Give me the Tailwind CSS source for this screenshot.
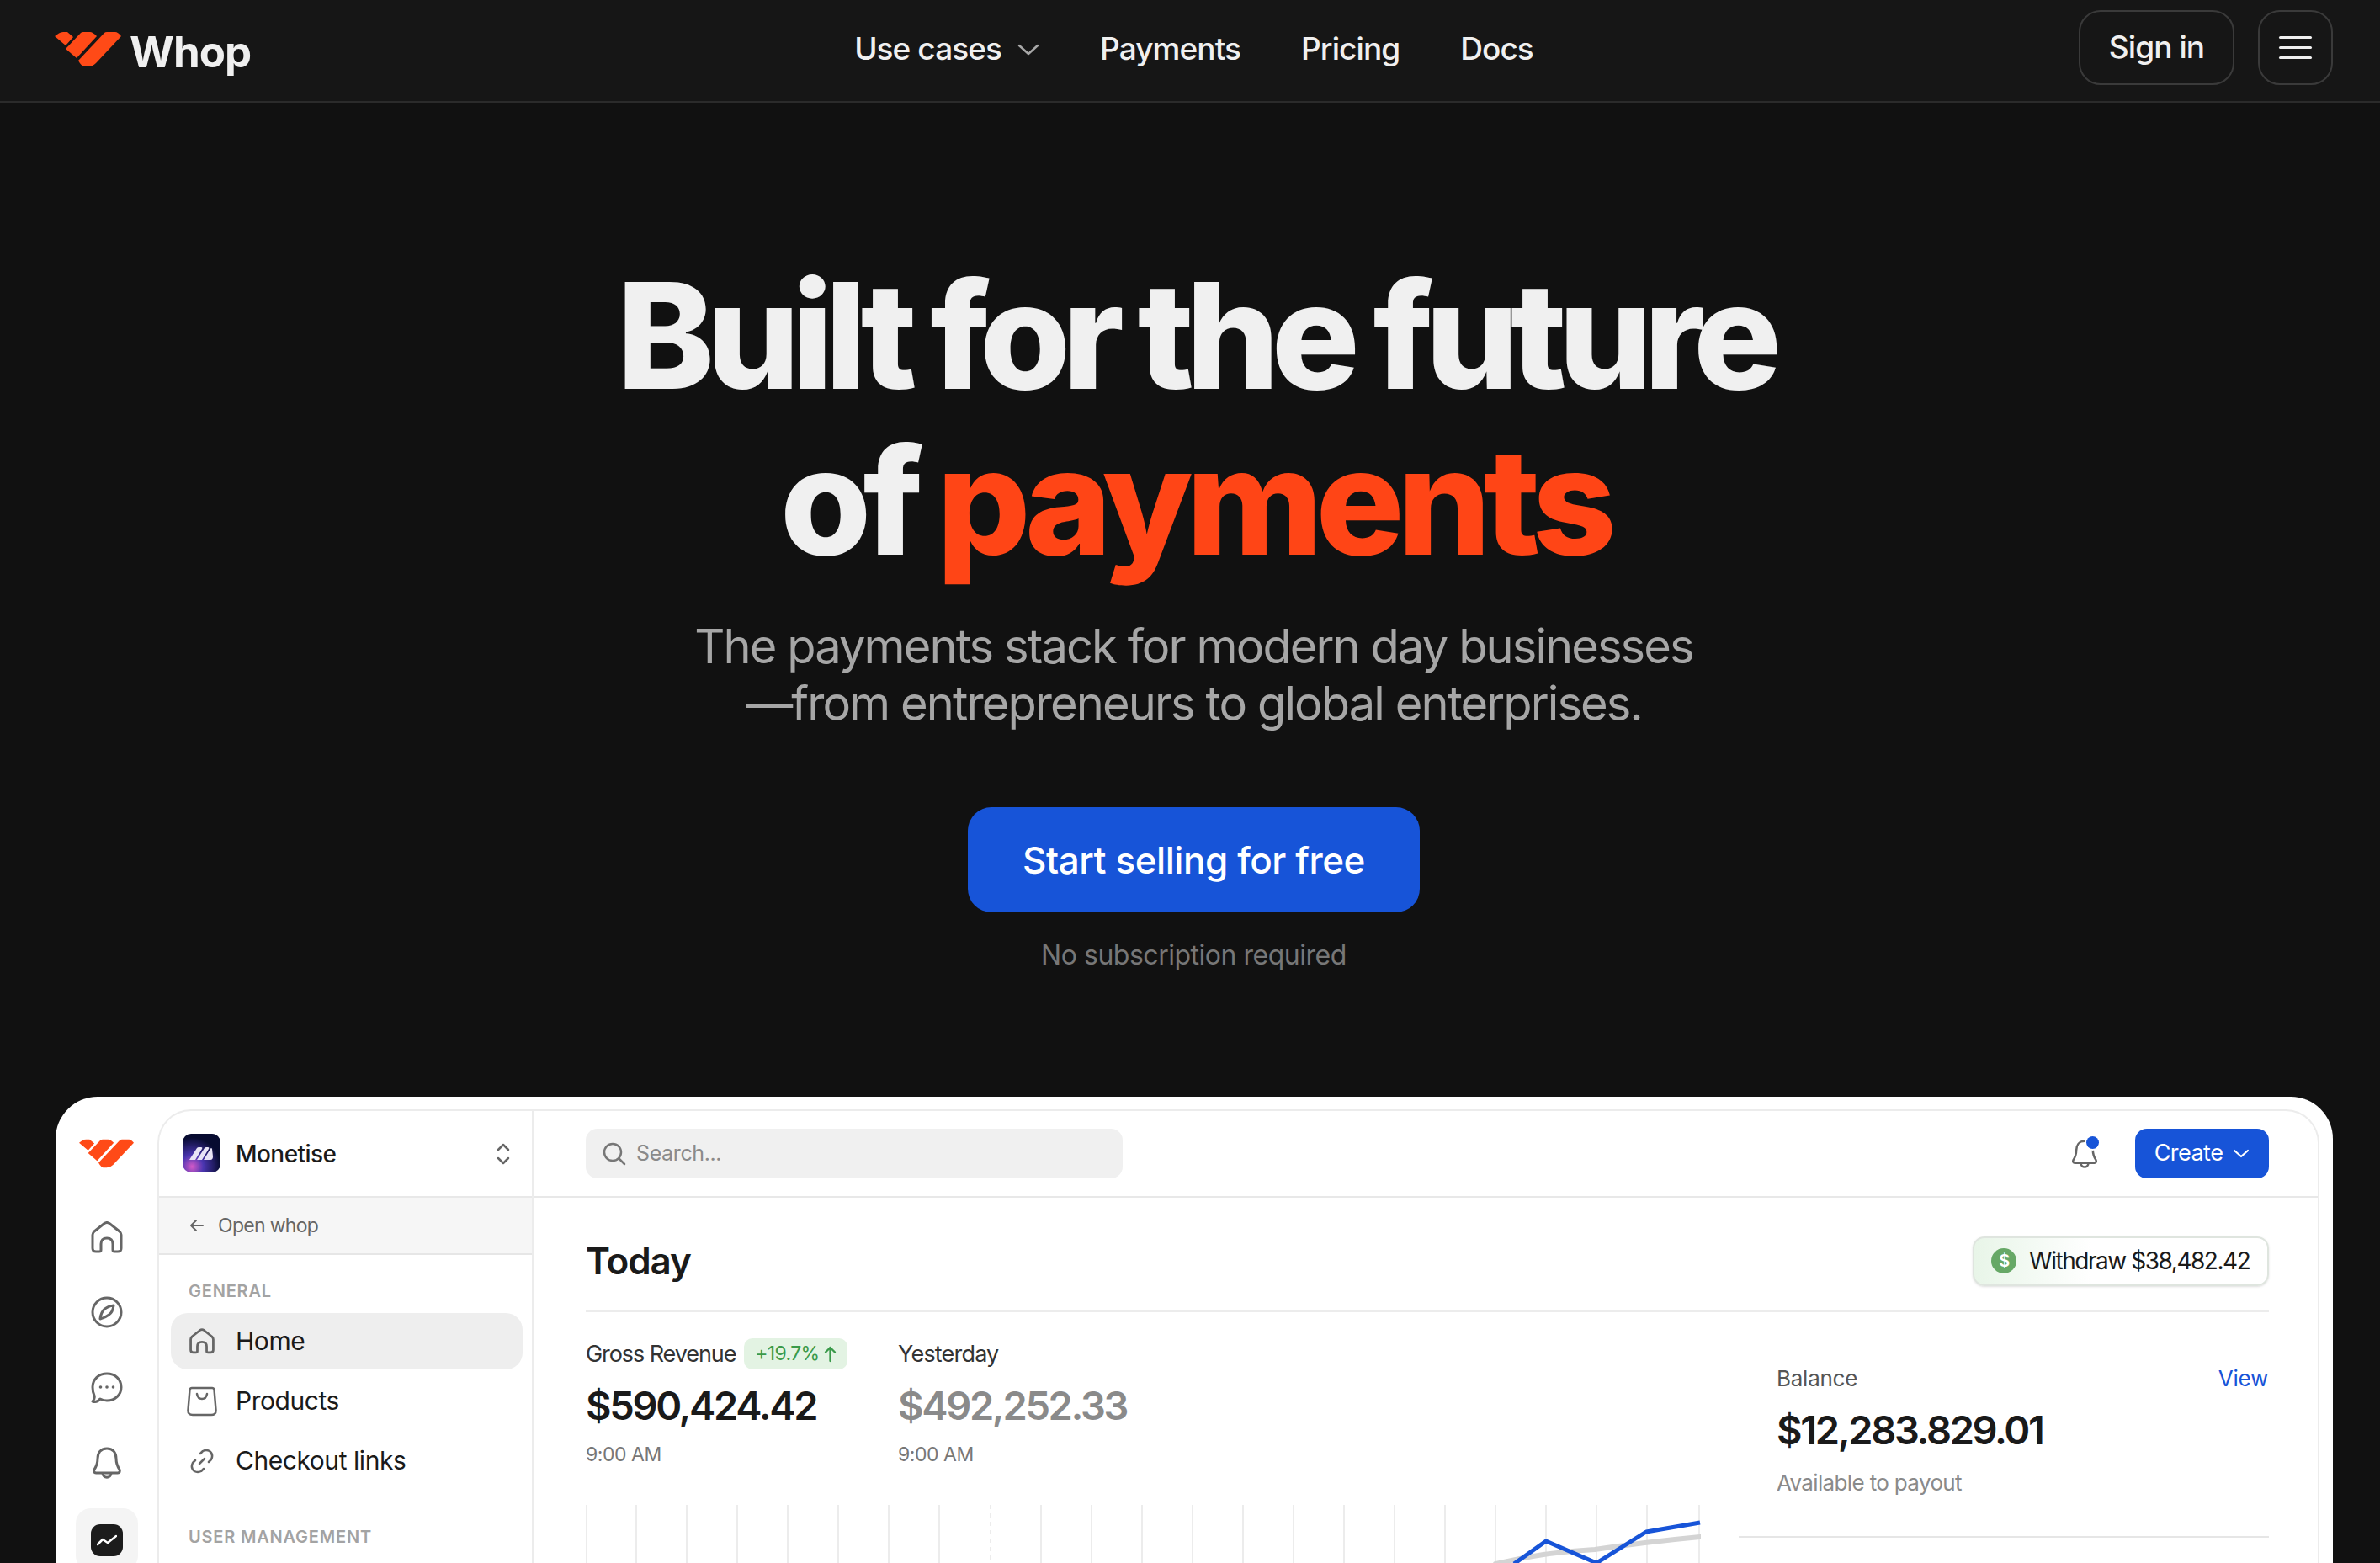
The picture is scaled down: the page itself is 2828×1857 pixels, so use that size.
<!DOCTYPE html>
<html lang="en">
<head>
  <meta charset="UTF-8" />
  <meta name="viewport" content="width=device-width, initial-scale=1.0"/>
  <title>Whop</title>
  <script src="https://cdn.jsdelivr.net/npm/@tailwindcss/browser@4"></script>
</head>
<body class="bg-[#111111] font-['Inter',sans-serif] h-[1857px] overflow-hidden">
  <!-- Navbar -->
  <header class="h-[122px] bg-[#161616] border-b-2 border-[#2b2b2b] flex items-center justify-between pl-[65px] pr-[56px] text-[#f0f0f0] relative">
    <a href="#" class="flex items-center gap-[10px] w-[300px]">
      <svg class="w-[79px] h-[41px] -mt-[3px]" viewBox="0 0 79 41" fill="#ff4a17">
        <path d="M0 5 L5 1.5 Q7 0 10 0 L15 0 L22 6 L13 16 Z"/>
        <path d="M13 20 L31 1 Q32 0 34 0 L42 0 Q45 0 50 5 L26 31 Z"/>
        <path d="M28 34 L59 1 Q60 0 62 0 L72 0 Q75 0 79 5 L49 37 Q45 41 40 41 L35 41 Q32 41 28 34 Z"/>
      </svg>
      <span class="text-[51px] font-bold leading-none tracking-[-0.02em] mt-[3px]">Whop</span>
    </a>
    <nav class="flex items-center gap-[72px] text-[37px] font-medium tracking-[-0.025em] -mt-[5px] ml-[2px]">
      <a href="#" class="flex items-center gap-[19px]">Use cases
        <svg class="w-[26px] h-[14px] mt-[3px]" viewBox="0 0 26 14" fill="none" stroke="#a8a8a8" stroke-width="2.5" stroke-linecap="round" stroke-linejoin="round"><path d="M2 2l11 10L24 2"/></svg>
      </a>
      <a href="#">Payments</a>
      <a href="#">Pricing</a>
      <a href="#">Docs</a>
    </nav>
    <div class="flex items-center gap-[28px] -mt-[8px]">
      <button class="w-[185px] h-[89px] rounded-[26px] border-2 border-[#3a3a3a] text-[37px] font-medium tracking-[-0.025em]">Sign in</button>
      <button class="w-[89px] h-[89px] rounded-[26px] border-2 border-[#3a3a3a] flex flex-col items-center justify-center gap-[9px]">
        <span class="w-[39px] h-[3px] rounded-full bg-[#f0f0f0]"></span>
        <span class="w-[39px] h-[3px] rounded-full bg-[#f0f0f0]"></span>
        <span class="w-[39px] h-[3px] rounded-full bg-[#f0f0f0]"></span>
      </button>
    </div>
  </header>

  <!-- Hero -->
  <section class="flex flex-col items-center pl-[9px]">
    <h1 class="mt-[178px] ml-[3px] text-[175px] leading-[197px] font-extrabold tracking-[-0.056em] [word-spacing:-3px] text-center text-[#f0f0f0] whitespace-nowrap">
      Built for the future<br>of <span class="text-[#ff4516] tracking-[-0.047em]">payments</span>
    </h1>
    <p class="mt-[40px] text-[56px] leading-[68px] tracking-[-0.034em] text-center text-[#a6a6a6]">
      The payments stack for modern day businesses<br>—from entrepreneurs to global enterprises.
    </p>
    <a href="#" class="mt-[89px] w-[537px] h-[125px] rounded-[28px] bg-[#1754d8] text-white text-[44px] font-medium tracking-[-0.01em] flex items-center justify-center">Start selling for free</a>
    <p class="mt-[29px] text-[32px] leading-[44px] tracking-[-0.015em] text-[#777777]">No subscription required</p>
  </section>

  <!-- Dashboard preview -->
  <section class="mt-[146px] ml-[66px] w-[2706px] h-[600px] bg-white rounded-t-[50px] flex overflow-hidden">
    <!-- Icon rail -->
    <aside class="w-[121px] shrink-0 flex flex-col items-center text-[#666666]">
      <svg class="mt-[50px] w-[65px] h-[35px]" viewBox="0 0 79 41" fill="#ff4a17">
        <path d="M0 5 L5 1.5 Q7 0 10 0 L15 0 L22 6 L13 16 Z"/>
        <path d="M13 20 L31 1 Q32 0 34 0 L42 0 Q45 0 50 5 L26 31 Z"/>
        <path d="M28 34 L59 1 Q60 0 62 0 L72 0 Q75 0 79 5 L49 37 Q45 41 40 41 L35 41 Q32 41 28 34 Z"/>
      </svg>
      <svg class="mt-[63px] w-[38px] h-[38px]" viewBox="0 0 38 38" fill="none" stroke="currentColor" stroke-width="3" stroke-linejoin="round" stroke-linecap="round"><path d="M2 16 Q2 14 4 12 L16 2.5 Q19 0.5 22 2.5 L34 12 Q36 14 36 16 V32 Q36 36 32 36 H28 Q26 36 26 34 V27 Q26 20 19 20 Q12 20 12 27 V34 Q12 36 10 36 H6 Q2 36 2 32 Z"/></svg>
      <svg class="mt-[51px] w-[38px] h-[38px]" viewBox="0 0 38 38" fill="none" stroke="currentColor" stroke-width="3" stroke-linejoin="round"><circle cx="19" cy="19" r="17"/><path d="M27 11 Q26 19 21.5 22 Q17 25.5 11 27 Q12 19 16 15.5 Q20 12 27 11 Z"/></svg>
      <svg class="mt-[52px] w-[38px] h-[38px]" viewBox="0 0 38 38" fill="none" stroke="currentColor" stroke-width="3" stroke-linejoin="round"><path d="M19 2 C29 2 36 9 36 18 C36 27 29 34 19 34 C16 34 13 33 11 32 C8 36 5 36 2 35 C4 33 4.5 30 4 28 C2.5 25 2 22 2 18 C2 9 9 2 19 2 Z"/><circle cx="11.5" cy="18" r="1.8" fill="currentColor" stroke="none"/><circle cx="19" cy="18" r="1.8" fill="currentColor" stroke="none"/><circle cx="26.5" cy="18" r="1.8" fill="currentColor" stroke="none"/></svg>
      <svg class="mt-[51px] w-[38px] h-[38px]" viewBox="0 0 38 38" fill="none" stroke="currentColor" stroke-width="3" stroke-linejoin="round"><path d="M19 2 C11 2 8 8 8 14 C8 21 6 24 4 27 C3 29 4 31 6 31 H32 C34 31 35 29 34 27 C32 24 30 21 30 14 C30 8 27 2 19 2 Z"/><path d="M14 31 C14 38 24 38 24 31"/></svg>
      <div class="mt-[35px] w-[74px] h-[74px] rounded-[18px] bg-[#f4f4f4] flex items-start justify-center pt-[19px] shrink-0">
        <div class="w-[38px] h-[38px] rounded-[11px] bg-[#1c1c1c] flex items-center justify-center shrink-0">
          <svg class="w-[24px] h-[14px]" viewBox="0 0 24 14" fill="none" stroke="white" stroke-width="2.5" stroke-linecap="round" stroke-linejoin="round"><path d="M1 12 L7 6 L13 10 L23 2"/></svg>
        </div>
      </div>
    </aside>

    <!-- Inner panel -->
    <div class="mt-[15px] w-[2569px] border-t-2 border-x-2 border-[#ececec] rounded-t-[40px] flex overflow-hidden">
      <!-- Sidebar -->
      <aside class="w-[445px] shrink-0 border-r-2 border-[#ececec]">
        <div class="h-[103px] border-b-2 border-[#e8e8e8] flex items-center pl-[28px] pr-[26px]">
          <svg class="w-[45px] h-[46px] -mt-[2px] shrink-0" viewBox="0 0 45 46">
            <defs>
              <radialGradient id="glow" cx="0.25" cy="0.85" r="0.75"><stop offset="0" stop-color="#d45ac8"/><stop offset="0.4" stop-color="#4a35b0"/><stop offset="1" stop-color="#070b30"/></radialGradient>
            </defs>
            <rect width="45" height="46" rx="10" fill="url(#glow)"/>
            <path d="M8 31 L17 17 Q18 16 19 16 H22 Q24 16 23 18 L15 31 Z M17 31 L26 17 Q27 16 28 16 H30 Q32 16 31 18 L23 31 Z M25 31 L33 18 Q34 16 35 18 L36 27 Q36 31 33 31 Z" fill="#e8e4f5"/>
          </svg>
          <span class="ml-[18px] text-[28px] font-medium tracking-[-0.02em] text-[#1a1a1a]">Monetise</span>
          <svg class="ml-auto w-[16px] h-[26px]" viewBox="0 0 16 26" fill="none" stroke="#666666" stroke-width="2.5" stroke-linecap="round" stroke-linejoin="round"><path d="M2 8l6-6 6 6M2 18l6 6 6-6"/></svg>
        </div>
        <div class="h-[68px] bg-[#f6f6f6] border-b-2 border-[#e6e6e6] flex items-center pl-[36px] text-[23px] tracking-[-0.03em] text-[#666666]">
          <svg class="w-[17px] h-[16px] mr-[17px]" viewBox="0 0 17 16" fill="none" stroke="currentColor" stroke-width="2" stroke-linecap="round" stroke-linejoin="round"><path d="M16 8H2M8 2L2 8l6 6"/></svg>
          Open whop
        </div>
        <div class="pl-[14px] pr-[11px]">
          <p class="mt-[31px] ml-[21px] text-[20px] leading-[24px] font-semibold tracking-[0.04em] text-[#a3a3a3]">GENERAL</p>
          <a href="#" class="mt-[14px] h-[67px] rounded-[20px] bg-[#eeeeee] flex items-center pl-[22px] text-[30px] tracking-[-0.015em] text-[#1a1a1a]">
            <svg class="w-[30px] h-[31px] mr-[25px]" viewBox="0 0 38 38" fill="none" stroke="#666666" stroke-width="3.5" stroke-linejoin="round" stroke-linecap="round"><path d="M2 16 Q2 14 4 12 L16 2.5 Q19 0.5 22 2.5 L34 12 Q36 14 36 16 V32 Q36 36 32 36 H28 Q26 36 26 34 V27 Q26 20 19 20 Q12 20 12 27 V34 Q12 36 10 36 H6 Q2 36 2 32 Z"/></svg>
            Home
          </a>
          <a href="#" class="mt-[4px] h-[67px] flex items-center pl-[19px] text-[30px] tracking-[-0.015em] text-[#1a1a1a]">
            <svg class="w-[36px] h-[36px] mr-[22px]" viewBox="0 0 36 36" fill="none" stroke="#666666" stroke-width="2.5" stroke-linecap="round" stroke-linejoin="round"><path d="M6 2 H30 Q32 2 32.5 4 L34.5 28 Q35 34 29 34 H7 Q1 34 1.5 28 L3.5 4 Q4 2 6 2 Z"/><path d="M12 9 Q13 15 18 15 Q23 15 24 9"/></svg>
            Products
          </a>
          <a href="#" class="mt-[4px] h-[67px] flex items-center pl-[22px] text-[30px] tracking-[-0.015em] text-[#1a1a1a]">
            <svg class="w-[30px] h-[30px] mr-[25px]" viewBox="0 0 30 30" fill="none" stroke="#666666" stroke-width="2.5" stroke-linecap="round" stroke-linejoin="round"><path d="M12 18l6-6"/><path d="M13 6l3-3q4-2 8 0 5 4 2 10l-3 3"/><path d="M17 24l-3 3q-4 2-8 0-5-4-2-10l3-3"/></svg>
            Checkout links
          </a>
          <p class="mt-[45px] ml-[21px] text-[20px] leading-[24px] font-semibold tracking-[0.04em] text-[#a3a3a3]">USER MANAGEMENT</p>
        </div>
      </aside>

      <!-- Main -->
      <main class="flex-1 min-w-0">
        <div class="h-[103px] border-b-2 border-[#e8e8e8] flex items-center pl-[62px] pr-[58px]">
          <div class="w-[638px] h-[59px] rounded-[14px] bg-[#f0f0f0] flex items-center pl-[20px] text-[25px] tracking-[-0.015em] text-[#8a8a8a]">
            <svg class="w-[28px] h-[28px] mr-[12px]" viewBox="0 0 28 28" fill="none" stroke="#777777" stroke-width="2.5" stroke-linecap="round"><circle cx="12" cy="12" r="10"/><path d="M20 20l6 6"/></svg>
            Search...
          </div>
          <div class="ml-auto mr-[47px] relative w-[30px] h-[38px]">
            <svg class="w-[34px] h-[38px]" viewBox="0 0 38 38" fill="none" stroke="#666666" stroke-width="2.8" stroke-linejoin="round"><path d="M19 2 C11 2 8 8 8 14 C8 21 6 24 4 27 C3 29 4 31 6 31 H32 C34 31 35 29 34 27 C32 24 30 21 30 14 C30 8 27 2 19 2 Z"/><path d="M14 31 C14 38 24 38 24 31"/></svg>
            <span class="absolute -top-[2px] left-[19px] w-[15px] h-[15px] rounded-full bg-[#1754d8] ring-2 ring-white"></span>
          </div>
          <button class="w-[159px] h-[59px] rounded-[14px] bg-[#1754d8] text-white text-[27px] tracking-[-0.02em] flex items-center justify-center gap-[12px]">Create
            <svg class="w-[20px] h-[11px]" viewBox="0 0 20 11" fill="none" stroke="white" stroke-width="2.2" stroke-linecap="round" stroke-linejoin="round"><path d="M2 2l8 7 8-7"/></svg>
          </button>
        </div>
        <div class="pl-[62px] pr-[58px]">
          <div class="h-[136px] pt-[16px] border-b-2 border-[#ececec] flex items-center justify-between">
            <h2 class="text-[44px] font-semibold tracking-[-0.025em] text-[#1a1a1a]">Today</h2>
            <div class="w-[352px] h-[59px] rounded-[14px] border-2 border-[#dfe5df] bg-gradient-to-r from-[#e8f5e8] to-white to-40% shadow-sm flex items-center pl-[20px] text-[28px] tracking-[-0.052em] whitespace-nowrap text-[#1a1a1a]">
              <span class="w-[30px] h-[30px] rounded-full bg-[#66a866] text-white text-[20px] font-semibold flex items-center justify-center mr-[15px] shrink-0">$</span>
              Withdraw $38,482.42
            </div>
          </div>
          <div class="flex">
            <div class="w-[1325px] shrink-0">
              <div class="flex pt-[31px]">
                <div class="w-[371px]">
                  <div class="flex items-center h-[37px]">
                    <span class="text-[27px] leading-[36px] tracking-[-0.04em] text-[#333333]">Gross Revenue</span>
                    <span class="ml-[10px] w-[123px] h-[37px] rounded-[10px] bg-[#e3f3e3] text-[#3a9a4a] text-[23px] tracking-[-0.03em] flex items-center justify-center gap-[6px]">+19.7%
                      <svg class="w-[15px] h-[20px]" viewBox="0 0 15 20" fill="none" stroke="currentColor" stroke-width="2.3" stroke-linecap="round" stroke-linejoin="round"><path d="M7.5 18V2M2 7.5L7.5 2 13 7.5"/></svg>
                    </span>
                  </div>
                  <p class="mt-[15px] text-[47px] leading-[56px] font-semibold tracking-[-0.05em] text-[#1a1a1a]">$590,424.42</p>
                  <p class="mt-[14px] text-[23px] leading-[32px] tracking-[-0.02em] text-[#777777]">9:00 AM</p>
                </div>
                <div>
                  <div class="flex items-center h-[37px]"><span class="text-[27px] leading-[36px] tracking-[-0.03em] text-[#333333]">Yesterday</span></div>
                  <p class="mt-[15px] text-[47px] leading-[56px] font-semibold tracking-[-0.05em] text-[#8a8a8a]">$492,252.33</p>
                  <p class="mt-[14px] text-[23px] leading-[32px] tracking-[-0.02em] text-[#777777]">9:00 AM</p>
                </div>
              </div>
              <svg class="mt-[44px] w-[1325px] h-[70px] block" viewBox="0 0 1325 70" fill="none">
                <path stroke="#e6e6e6" stroke-width="1.5" d="M1 0V70M60 0V70M120 0V70M180 0V70M240 0V70M300 0V70M360 0V70M420 0V70M541 0V70M601 0V70M661 0V70M721 0V70M781 0V70M841 0V70M901 0V70M961 0V70M1021 0V70M1081 0V70M1141 0V70M1201 0V70M1261 0V70M1323 0V70"/>
                <path stroke="#e6e6e6" stroke-width="1.5" stroke-dasharray="5 5" d="M481 0V70"/>
                <path stroke="#d4d4d4" stroke-width="6" stroke-linecap="round" d="M1081 70Q1140 56 1199 53Q1260 44 1324 38"/>
                <path stroke="#1754d8" stroke-width="5" stroke-linejoin="round" d="M1103 70L1141 43L1201 69L1260 32L1324 21"/>
              </svg>
            </div>
            <div class="ml-[45px] flex-1 pt-[61px]">
              <div class="pl-[45px] flex items-center justify-between text-[26px] leading-[36px] tracking-[-0.01em]">
                <span class="text-[#555555]">Balance</span>
                <a href="#" class="text-[#1754d8] mr-[1px]">View</a>
              </div>
              <p class="pl-[45px] mt-[15px] text-[47px] leading-[56px] font-semibold tracking-[-0.05em] text-[#1a1a1a]">$12,283.829.01</p>
              <p class="pl-[45px] mt-[19px] text-[26px] leading-[32px] tracking-[-0.025em] text-[#8a8a8a]">Available to payout</p>
              <div class="mt-[47px] border-t-2 border-[#e6e6e6]"></div>
            </div>
          </div>
        </div>
      </main>
    </div>
  </section>
</body>
</html>
